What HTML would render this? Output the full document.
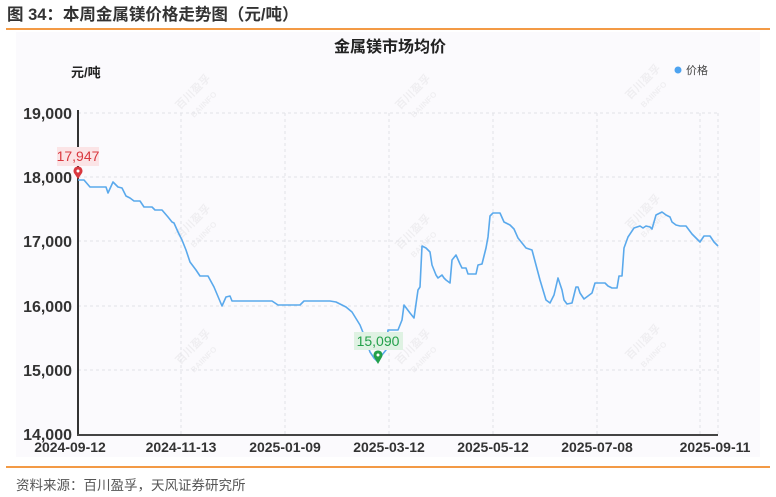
<!DOCTYPE html>
<html><head><meta charset="utf-8"><style>
body{margin:0;width:776px;height:497px;background:#fff;overflow:hidden;font-family:"Liberation Sans","Noto Sans CJK SC",sans-serif;}
</style></head><body>
<svg width="776" height="497" xmlns="http://www.w3.org/2000/svg" style="position:absolute;left:0;top:0" font-family="Liberation Sans, Noto Sans CJK SC, sans-serif">
<text x="7" y="20" font-size="16.5" font-weight="bold" fill="#333">图 34：本周金属镁价格走势图（元/吨）</text>
<rect x="6" y="28" width="764" height="2" fill="#f39a45"/>
<rect x="16" y="32" width="744" height="425" fill="#fbfafd"/>
<text x="390" y="52" font-size="16" font-weight="bold" fill="#222" text-anchor="middle">金属镁市场均价</text>
<text x="71" y="77" font-size="13" font-weight="bold" fill="#222">元/吨</text>
<circle cx="678" cy="70" r="3.5" fill="#4da3f0"/>
<text x="686" y="74" font-size="11" fill="#444">价格</text>
<g font-size="11" fill="#000" opacity="0.05" font-weight="bold">
<text transform="translate(180,110) rotate(-45)">百川盈孚</text><text transform="translate(194,118) rotate(-45)" font-size="8">BAIINFO</text>
<text transform="translate(400,110) rotate(-45)">百川盈孚</text><text transform="translate(414,118) rotate(-45)" font-size="8">BAIINFO</text>
<text transform="translate(630,100) rotate(-45)">百川盈孚</text><text transform="translate(644,108) rotate(-45)" font-size="8">BAIINFO</text>
<text transform="translate(180,240) rotate(-45)">百川盈孚</text><text transform="translate(194,248) rotate(-45)" font-size="8">BAIINFO</text>
<text transform="translate(400,250) rotate(-45)">百川盈孚</text><text transform="translate(414,258) rotate(-45)" font-size="8">BAIINFO</text>
<text transform="translate(630,230) rotate(-45)">百川盈孚</text><text transform="translate(644,238) rotate(-45)" font-size="8">BAIINFO</text>
<text transform="translate(180,365) rotate(-45)">百川盈孚</text><text transform="translate(194,373) rotate(-45)" font-size="8">BAIINFO</text>
<text transform="translate(400,365) rotate(-45)">百川盈孚</text><text transform="translate(414,373) rotate(-45)" font-size="8">BAIINFO</text>
<text transform="translate(630,360) rotate(-45)">百川盈孚</text><text transform="translate(644,368) rotate(-45)" font-size="8">BAIINFO</text>
</g>
<g stroke="#e2e2e8" stroke-dasharray="3,3" stroke-width="1">
<line x1="78" y1="113" x2="718" y2="113"/><line x1="78" y1="177" x2="718" y2="177"/><line x1="78" y1="241" x2="718" y2="241"/><line x1="78" y1="306" x2="718" y2="306"/><line x1="78" y1="370" x2="718" y2="370"/>
<line x1="181" y1="113" x2="181" y2="435"/><line x1="285" y1="113" x2="285" y2="435"/><line x1="389" y1="113" x2="389" y2="435"/><line x1="493" y1="113" x2="493" y2="435"/><line x1="597" y1="113" x2="597" y2="435"/><line x1="700" y1="113" x2="700" y2="435"/><line x1="718" y1="113" x2="718" y2="435"/>
</g>
<line x1="78" y1="110" x2="78" y2="436" stroke="#333" stroke-width="2"/>
<line x1="77" y1="435" x2="718" y2="435" stroke="#444" stroke-width="2"/>
<g font-size="16" font-weight="bold" fill="#333" text-anchor="end">
<text x="72" y="119">19,000</text><text x="72" y="183">18,000</text><text x="72" y="247">17,000</text><text x="72" y="312">16,000</text><text x="72" y="376">15,000</text><text x="72" y="440">14,000</text>
</g>
<g font-size="14" font-weight="bold" fill="#333" text-anchor="middle">
<text x="70" y="452">2024-09-12</text><text x="181" y="452">2024-11-13</text><text x="285" y="452">2025-01-09</text><text x="389" y="452">2025-03-12</text><text x="493" y="452">2025-05-12</text><text x="597" y="452">2025-07-08</text><text x="715" y="452">2025-09-11</text>
</g>
<polyline fill="none" stroke="#5aa9ec" stroke-width="1.6" stroke-linejoin="round" points="78,180 84,180 90,187 106,187 108,193 113,182 118,187 122,188 126,196 130,198 134,201 140,201 144,207 152,207 155,210 162,210 168,217 172,222 174,223 178,232 182,240 186,250 190,262 196,270 200,276 208,276 214,287 222,306 226,297 230,296 232,301 272,301 278,305 300,305 304,301 330,301 336,302 346,307 352,312 360,325 364,335 370,352 374,358 378,362 382,355 386,350 388,330 398,330 402,320 404,305 410,313 414,318 418,290 420,287 422,246 426,248 430,252 432,265 436,275 438,278 442,275 444,278 446,280 450,283 452,260 456,255 460,264 462,268 466,268 468,274 476,274 478,265 482,264 486,248 488,237 490,216 493,213 500,213 504,222 510,225 514,229 518,238 526,248 532,250 540,280 546,300 550,303 554,295 558,278 562,290 564,300 567,304 572,303 576,287 578,287 580,293 584,299 588,296 592,293 595,283 605,283 608,286 612,288 617,288 619,276 622,276 624,248 628,237 634,228 640,226 643,228 646,226 650,227 652,229 656,215 660,213 662,212 666,215 670,217 672,222 676,225 680,226 686,226 692,234 698,240 700,242 704,236 710,236 714,242 718,246"/>
<rect x="57" y="147" width="42" height="19" fill="#fbe4e6"/>
<text x="78" y="161" font-size="14" fill="#d9383f" text-anchor="middle">17,947</text>
<path d="M78,179 L74,173 A4.5,4.5 0 1 1 82,173 Z" fill="#d9383f"/><circle cx="78" cy="171" r="1.5" fill="#fff"/>
<rect x="354" y="332" width="49" height="18" fill="#dff2e3"/>
<text x="378" y="346" font-size="14" fill="#23a04a" text-anchor="middle">15,090</text>
<path d="M378,364 L374,357 A4.5,4.5 0 1 1 382,357 Z" fill="#23a04a"/><circle cx="378" cy="355" r="1.5" fill="#fff"/>
<rect x="6" y="466" width="764" height="2" fill="#f39a45"/>
<text x="16" y="490" font-size="13.5" fill="#555">资料来源：百川盈孚，天风证券研究所</text>
</svg>
</body></html>
